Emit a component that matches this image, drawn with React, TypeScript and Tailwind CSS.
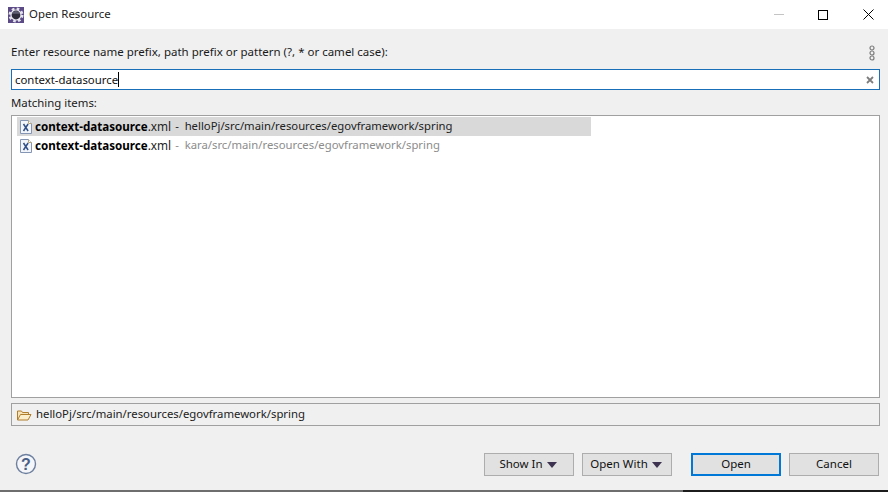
const font = { fontFamily: '"Noto Sans", sans-serif' };

function XmlIcon() {
  return (
    <svg width="16" height="16" viewBox="0 0 16 16" className="shrink-0">
      <path d="M2.5 1.5h8l3 3v10h-11z" fill="#f2f5fa" stroke="#8496b4" />
      <path d="M10.5 1.5v3h3" fill="#fff" stroke="#b9a77c" />
      <path d="M5.5 5l4.6 7M10.1 5l-4.6 7" stroke="#2f4f86" strokeWidth="1.5" fill="none" />
    </svg>
  );
}

function Row({ path, selected }: { path: string; selected?: boolean }) {
  return (
    <div className={`flex h-[19px] w-[574px] items-center pl-[1px] ${selected ? "bg-[#d9d9d9]" : ""}`}>
      <XmlIcon />
      <span className="ml-[1px] text-[11.6px] font-bold text-black">context-datasource</span>
      <span className="text-[11.8px] text-[#222]">.xml</span>
      <span className={`ml-[4px] whitespace-pre text-[11.3px] ${selected ? "text-[#222]" : "text-[#8c8c8c]"}`}>{"-  " + path}</span>
    </div>
  );
}

function Btn({ label, arrow, primary }: { label: string; arrow?: boolean; primary?: boolean }) {
  return (
    <button
      className={`flex h-[23px] w-[90px] items-center justify-center gap-[4px] bg-[#e1e1e1] pb-[1px] text-[11.5px] text-[#111] ${
        primary ? "border-2 border-[#0078d7]" : "border border-[#adadad]"
      } ${arrow ? "pr-[2px]" : ""}`}
    >
      {label}
      {arrow && (
        <svg width="10" height="6" viewBox="0 0 10 6" className="mt-[1px]">
          <path d="M0 0h10L5 6z" fill="#3d3350" />
        </svg>
      )}
    </button>
  );
}

export default function App() {
  return (
    <div className="flex h-[492px] w-[888px] flex-col overflow-hidden bg-[#f0f0f0] text-[11.4px] text-[#1a1a1a]" style={font}>
      <div className="flex h-[29px] shrink-0 items-center bg-white">
        <svg width="16" height="16" viewBox="0 0 16 16" className="ml-[8px]">
          <rect width="16" height="16" fill="#5b4a86" />
          <circle cx="8" cy="8" r="5.8" fill="none" stroke="#e4e4ea" strokeWidth="3.4" strokeDasharray="2.4 2.15" />
          <circle cx="8" cy="8" r="5.6" fill="#e8e8ee" />
          <circle cx="8" cy="8" r="4.4" fill="#2e2c3a" />
          <path d="M3.9 6.8a4.4 4.4 0 0 1 8.2 0z" fill="#5f5d72" />
        </svg>
        <span className="ml-[5px] pb-[2px] text-[#222]">Open Resource</span>
        <div className="ml-auto flex items-center">
          <div className="mr-[34px] h-[1px] w-[10px] bg-[#c4c4c4]" />
          <div className="mr-[35px] h-[10px] w-[10px] border border-black" />
          <svg width="11" height="11" viewBox="0 0 11 11" className="mr-[14px]">
            <path d="M0.5 0.5l10 10M10.5 0.5l-10 10" stroke="#000" fill="none" />
          </svg>
        </div>
      </div>
      <div className="flex min-h-0 flex-1 flex-col pl-[11px] pr-[8px]">
        <div className="mt-[15px] flex h-[17px] w-[869px] items-center justify-between pr-[4px]">
          <span className="pb-[2px] text-[11.5px]">Enter resource name prefix, path prefix or pattern (?, * or camel case):</span>
          <svg width="8" height="16" viewBox="0 0 8 16">
            <g fill="none" stroke="#7d7d7d" strokeWidth="1.2">
              <circle cx="4" cy="3" r="2" />
              <circle cx="4" cy="8" r="2" />
              <circle cx="4" cy="13" r="2" />
            </g>
          </svg>
        </div>
        <div className="mt-[8px] flex h-[21px] w-[869px] items-center border border-[#1a70b8] bg-white pl-[3px] pr-[5px]">
          <span className="text-[#111]">context-datasource</span>
          <div className="h-[15px] w-[1px] bg-black" />
          <svg width="8" height="8" viewBox="0 0 8 8" className="ml-auto">
            <path d="M1 1l6 6M7 1l-6 6" stroke="#7d7d7d" strokeWidth="1.8" fill="none" />
          </svg>
        </div>
        <div className="mt-[4px] flex h-[20px] items-center pb-[2px]">Matching items:</div>
        <div className="mt-[1px] h-[283px] w-[869px] border border-[#a0a0a0] bg-white px-[5px] py-[1px]">
          <Row selected path="helloPj/src/main/resources/egovframework/spring" />
          <Row path="kara/src/main/resources/egovframework/spring" />
        </div>
        <div className="mt-[5px] flex h-[23px] w-[869px] items-center border border-[#a0a0a0] pl-[4px]">
          <svg width="16" height="16" viewBox="0 0 16 16">
            <path d="M1.5 13V4h4l1 1.5h6V8" fill="#f6e3b8" stroke="#b07d2c" />
            <path d="M1.5 13l3-5.5h10.5l-3 5.5z" fill="#fbeecb" stroke="#b07d2c" />
          </svg>
          <span className="ml-[4px] pb-[2px] text-[11.35px] text-[#222]">helloPj/src/main/resources/egovframework/spring</span>
        </div>
        <div className="mt-[27px] flex h-[23px] items-center">
          <svg width="22" height="22" viewBox="0 0 22 22" className="ml-[4px] -translate-y-[1px]">
            <circle cx="11" cy="11" r="9.5" fill="#f4f6fa" stroke="#6d7f9e" strokeWidth="1.4" />
            <text x="11" y="16.5" textAnchor="middle" fontSize="16" fontWeight="bold" fill="#4a5f85" fontFamily="Liberation Sans">?</text>
          </svg>
          <div className="ml-auto flex">
            <Btn label="Show In" arrow />
            <div className="w-[8px]" />
            <Btn label="Open With" arrow />
            <div className="w-[19px]" />
            <Btn label="Open" primary />
            <div className="w-[8px]" />
            <Btn label="Cancel" />
            <div className="w-[1px]" />
          </div>
        </div>
      </div>
      <div className="flex h-[2px] shrink-0">
        <div className="h-full w-[683px] bg-[#6e6e6e]" />
        <div className="h-full flex-1 bg-[#1c1c1c]" />
      </div>
    </div>
  );
}
